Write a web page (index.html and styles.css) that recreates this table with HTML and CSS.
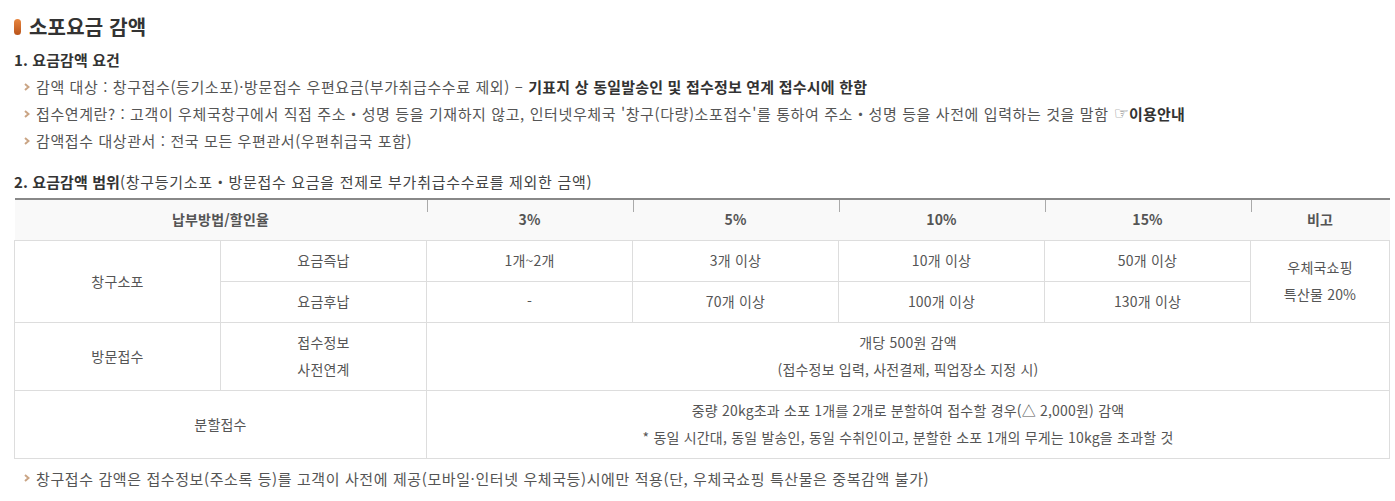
FILE: index.html
```html
<!DOCTYPE html>
<html lang="ko">
<head>
<meta charset="utf-8">
<link rel="stylesheet" href="styles.css">
</head>
<body>
<div class="page">
  <h1 class="title"><span class="title-mark"></span>소포요금 감액</h1>
  <h2 class="sub">1. 요금감액 요건</h2>
  <ul class="bullets">
    <li><svg class="chev" width="6" height="8" viewBox="0 0 6 8"><path d="M1 1 L4.5 4 L1 7" fill="none" stroke="#caa585" stroke-width="2"/></svg>감액 대상 : 창구접수(등기소포)·방문접수 우편요금(부가취급수수료 제외) – <b>기표지 상 동일발송인 및 접수정보 연계 접수시에 한함</b></li>
    <li><svg class="chev" width="6" height="8" viewBox="0 0 6 8"><path d="M1 1 L4.5 4 L1 7" fill="none" stroke="#caa585" stroke-width="2"/></svg>접수연계란? : 고객이 우체국창구에서 직접 주소・성명 등을 기재하지 않고, 인터넷우체국 '창구(다량)소포접수'를 통하여 주소・성명 등을 사전에 입력하는 것을 말함 <span class="hand">☞</span><b>이용안내</b></li>
    <li><svg class="chev" width="6" height="8" viewBox="0 0 6 8"><path d="M1 1 L4.5 4 L1 7" fill="none" stroke="#caa585" stroke-width="2"/></svg>감액접수 대상관서 : 전국 모든 우편관서(우편취급국 포함)</li>
  </ul>
  <h2 class="sub sub2"><b>2. 요금감액 범위</b>(창구등기소포・방문접수 요금을 전제로 부가취급수수료를 제외한 금액)</h2>
  <table class="rates">
    <colgroup>
      <col class="c"><col class="c"><col class="c"><col class="c"><col class="c"><col class="c"><col class="last">
    </colgroup>
    <thead>
      <tr>
        <th colspan="2" class="first">납부방법/할인율</th>
        <th>3%</th>
        <th>5%</th>
        <th>10%</th>
        <th>15%</th>
        <th>비고</th>
      </tr>
    </thead>
    <tbody>
      <tr class="r1">
        <td rowspan="2">창구소포</td>
        <td>요금즉납</td>
        <td>1개~2개</td>
        <td>3개 이상</td>
        <td>10개 이상</td>
        <td>50개 이상</td>
        <td rowspan="2">우체국쇼핑<br>특산물 20%</td>
      </tr>
      <tr class="r1">
        <td>요금후납</td>
        <td>-</td>
        <td>70개 이상</td>
        <td>100개 이상</td>
        <td>130개 이상</td>
      </tr>
      <tr class="r2">
        <td>방문접수</td>
        <td>접수정보<br>사전연계</td>
        <td colspan="5">개당 500원 감액<br>(접수정보 입력, 사전결제, 픽업장소 지정 시)</td>
      </tr>
      <tr class="r2">
        <td colspan="2">분할접수</td>
        <td colspan="5">중량 20kg초과 소포 1개를 2개로 분할하여 접수할 경우(△ 2,000원) 감액<br>* 동일 시간대, 동일 발송인, 동일 수취인이고, 분할한 소포 1개의 무게는 10kg을 초과할 것</td>
      </tr>
    </tbody>
  </table>
  <ul class="bullets foot">
    <li><svg class="chev" width="6" height="8" viewBox="0 0 6 8"><path d="M1 1 L4.5 4 L1 7" fill="none" stroke="#caa585" stroke-width="2"/></svg>창구접수 감액은 접수정보(주소록 등)를 고객이 사전에 제공(모바일·인터넷 우체국등)시에만 적용(단, 우체국쇼핑 특산물은 중복감액 불가)</li>
  </ul>
</div>
</body>
</html>
```

FILE: styles.css
```css
* { box-sizing: border-box; }
html, body { margin: 0; padding: 0; background: #fff; }
body {
  font-family: "Noto Sans CJK KR", "Noto Sans", sans-serif;
  color: #555;
  font-size: 14px;
}
.page {
  padding: 12px 6px 0 14px;
}
.title {
  margin: 0;
  font-size: 20px;
  line-height: 30px;
  font-weight: 700;
  color: #333;
  display: flex;
  align-items: center;
  letter-spacing: 0.2px;
}
.title-mark {
  display: inline-block;
  width: 7px;
  height: 16px;
  border-radius: 4px;
  background: linear-gradient(#e8863f, #b9531b);
  margin-right: 8px;
}
.sub {
  margin: 6px 0 0;
  font-size: 15px;
  line-height: 24px;
  font-weight: 700;
  color: #333;
  letter-spacing: 0.1px;
}
.sub2 {
  margin-top: 16px;
  font-weight: 400;
  color: #444;
  letter-spacing: 0.7px;
}
.sub2 b { font-weight: 700; color: #333; letter-spacing: 0.1px; }
.bullets {
  list-style: none;
  margin: 1px 0 0;
  padding: 0 0 0 10px;
}
.bullets li {
  line-height: 27px;
  font-size: 15px;
  letter-spacing: 0.6px;
  display: flex;
  align-items: center;
  white-space: nowrap;
}
.bullets li b { color: #333; font-weight: 700; margin-left: 5px; letter-spacing: 0.2px; }
.bullets li .hand + b { margin-left: 0; }
.chev { margin-right: 6px; flex: none; }
.hand { color: #777; font-family: "DejaVu Sans", sans-serif; font-size: 17px; margin-left: 5px; letter-spacing: 0; }
.rates {
  margin-top: 4px;
  width: 1375px;
  border-collapse: collapse;
  table-layout: fixed;
  border-top: 2px solid #888;
}
.rates col.c { width: 206px; }
.rates col.last { width: 139px; }
.rates th, .rates td {
  border: 1px solid #ddd;
  text-align: center;
  vertical-align: middle;
  font-size: 14px;
  letter-spacing: 0.2px;
  line-height: 27px;
  padding: 6px 0;
}
.rates th {
  border-top: none;
  border-left: 0 none;
  border-right: 0 none;
  height: 41px;
  background: #f9f9f9 linear-gradient(#aaa, #aaa) left top / 1px 12px no-repeat;
  color: #555;
  font-weight: 700;
}
.rates th.first { background: #f9f9f9; }
.rates tr.r1 td { height: 41px; }
.rates tr.r2 td { height: 68px; }
.foot { margin-top: 6px; }
```
